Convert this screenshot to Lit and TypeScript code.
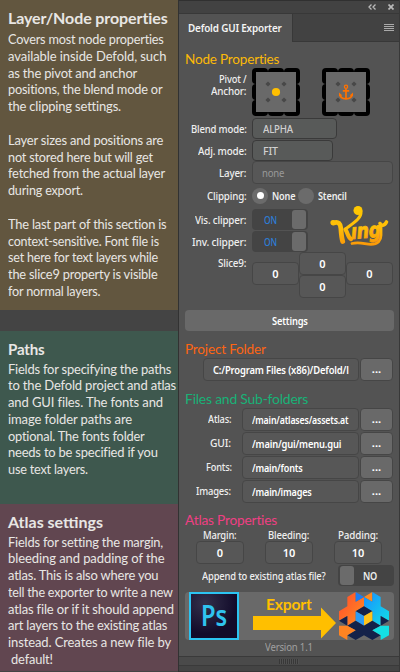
import { LitElement, html, css, svg, nothing } from "lit";
import { customElement, property } from "lit/decorators.js";

/* A single line of text fitted to a given width: light tracking first, then a horizontal scale. */
@customElement("fit-text")
class FitText extends LitElement {
  @property() text = "";
  @property({ type: Number }) width = 0;
  static styles = css`
    :host { display: inline-block; white-space: pre; flex: none; text-align: left; }
    .line { display: inline-block; white-space: pre; transform-origin: 0 50%; }
  `;
  render() {
    return html`<span class="line">${this.text}</span>`;
  }
  updated() {
    const line = this.renderRoot.querySelector(".line") as HTMLElement;
    const n = this.text.length - 1;
    const natural = line.offsetWidth;
    const gap = Math.max(-0.2, Math.min(0.3, (this.width - natural) / n));
    line.style.letterSpacing = `${gap}px`;
    line.style.marginRight = `${this.width - natural - gap * (n + 1)}px`;
    line.style.transform = `scaleX(${this.width / (natural + gap * n)})`;
  }
}

const t = (text: string, width: number, cls = "") =>
  html`<fit-text class=${cls} .text=${text} .width=${width}></fit-text>`;

type Line = [string, number];

const layerLines: Line[] = [
  ["Covers most node properties", 156],
  ["available inside Defold, such", 158],
  ["as the pivot and anchor", 129],
  ["positions, the blend mode or", 155],
  ["the clipping settings.", 113],
  ["", 0],
  ["Layer sizes and positions are", 156],
  ["not stored here but will get", 145],
  ["fetched from the actual layer", 157],
  ["during export.", 75],
  ["", 0],
  ["The last part of this section is", 159],
  ["context-sensitive. Font file is", 151],
  ["set here for text layers while", 150],
  ["the slice9 property is visible", 150],
  ["for normal layers.", 93],
];
const pathLines: Line[] = [
  ["Fields for specifying the paths", 163],
  ["to the Defold project and atlas", 168],
  ["and GUI files. The fonts and", 155],
  ["image folder paths are", 124],
  ["optional. The fonts folder", 137],
  ["needs to be specified if you", 150],
  ["use text layers.", 80],
];
const atlasLines: Line[] = [
  ["Fields for setting the margin,", 155],
  ["bleeding and padding of the", 157],
  ["atlas. This is also where you", 151],
  ["tell the exporter to write a new", 165],
  ["atlas file or if it should append", 166],
  ["art layers to the existing atlas", 160],
  ["instead. Creates a new file by", 163],
  [" default!", 45],
];

const lines = (list: Line[]) =>
  list.map(([s, w]) => html`<div class="line">${s ? t(s, w) : nothing}</div>`);

const pad = (mark: unknown) => html`<svg class="pad" width="48" height="48" viewBox="0 0 48 48">
  ${[0, 1, 2].map((r) =>
    [0, 1, 2].map((c) => svg`<rect x=${c * 16} y=${r * 16} width="16" height="16" rx="4"></rect>`)
  )}
  <rect x="4" y="4" width="40" height="40" fill="#696969" />
  ${[16, 32].map((y) =>
    [16, 32].map((x) => svg`<path d="M${x} ${y - 2.6}l2.6 2.6l-2.6 2.6l-2.6-2.6z" fill="#484848"></path>`)
  )}
  ${mark}
</svg>`;

const dot = svg`<circle cx="24" cy="24" r="4.1" fill="#ffbf00"></circle>`;
const anchor = svg`<g fill="none" stroke="#ff7200" stroke-width="1.6">
  <circle cx="24" cy="18.8" r="1.6" stroke-width="1.3"></circle>
  <path d="M24 20.5V30.5M20.8 22.9h6.4" stroke-width="1.7"></path>
  <path d="M17.8 26.4c.4 3 2.700 4.300 6.200 4.500c3.500-.2 5.800-1.500 6.200-4.500"></path>
  <path d="M17 28.200V24.600L20.400 27.400zM31 28.200V24.600L27.600 27.400z" fill="#ff7200" stroke="none"></path>
</g>`;

const king = html`<svg class="king" width="62" height="46" viewBox="0 0 62 46">
  <defs>
    <linearGradient id="gold" x1="0" y1="0" x2="0" y2="46" gradientUnits="userSpaceOnUse">
      <stop offset="0.1" stop-color="#ffc800" />
      <stop offset="0.55" stop-color="#ffbe08" />
      <stop offset="1" stop-color="#f99008" />
    </linearGradient>
  </defs>
  <g fill="none" stroke="url(#gold)" stroke-linecap="round">
    <circle cx="28" cy="7.500" r="4.500" fill="url(#gold)" stroke="none" />
    <path d="M31 8.500C31.500 15 25 19 15.500 26" stroke-width="3" />
    <circle cx="3" cy="19.500" r="2.600" fill="url(#gold)" stroke="none" />
    <path d="M3.500 20c5-2 7 1 7.400 5.500c.3 5 .6 9 1.800 13" stroke-width="4.800" />
    <path d="M15.500 26.500c2.500 4 2.500 8 5.500 9.500" stroke-width="4.200" />
    <path d="M22 40.500c8-2 13 .8 19 .8c7 0 10-4 10-9V22" stroke-width="2.800" />
    <path d="M50 20.500c1 2.500 4.500 2.500 6.500-1.500" stroke-width="3.600" />
  </g>
  <text x="21.500" y="36" transform="rotate(-4 21.500 36)" class="wordmark" textLength="30" lengthAdjust="spacingAndGlyphs">ıng</text>
</svg>`;

const arrow = html`<svg class="arrow" width="83" height="32" viewBox="0 0 83 32">
  <path d="M0 9h68V0.500L83 16L68 31.500V23H0z" fill="#ffbf00" />
</svg>`;

const cubes = html`<svg class="cubes" width="50" height="48" viewBox="0 0 150 144">
  <defs>
    <linearGradient id="warm" x1="0" y1="0" x2="1" y2="1">
      <stop offset="0" stop-color="#ff4a2c" /><stop offset="1" stop-color="#ff9022" />
    </linearGradient>
    <linearGradient id="cool" x1="0" y1="0" x2="1" y2="1">
      <stop offset="0" stop-color="#1a8cff" /><stop offset="1" stop-color="#10e2e6" />
    </linearGradient>
  </defs>
  <path d="M50 0L25 15V43L0 58V86L25 72V101L50 86V58L75 43V15L50 29z" fill="url(#warm)" />
  <path d="M50 0L75 15L50 29z" fill="#1d7df2" />
  <path d="M100 0L75 15L100 29z" fill="#ff8a20" />
  <path d="M100 0L125 15V43L150 58V86L125 72V101L100 86V58L75 43V15L100 29z" fill="url(#cool)" />
  <path d="M75 43L100 58L75 72L50 58z" fill="#14224a" />
  <path d="M50 58L75 72V101L50 86z" fill="#2c9cf5" />
  <path d="M100 58L75 72V101L100 86z" fill="#ffc21a" />
  <path d="M0 86L25 72V101z" fill="#14224a" />
  <path d="M150 86L125 72V101z" fill="#14224a" />
  <path d="M50 86L75 101L100 86L125 101L100 115L125 130L100 144L75 130L50 144L25 130L50 115L25 101z" fill="#14224a" />
  <path d="M0 101L25 101L50 115L25 130V144L0 130z" fill="#ff8422" />
  <path d="M150 101L125 101L100 115L125 130V144L150 130z" fill="#14e0e4" />
</svg>`;

@customElement("app-root")
class AppRoot extends LitElement {
  static styles = css`
    * { box-sizing: border-box; }
    :host {
      display: flex; width: 400px; height: 672px; overflow: hidden; background: #444;
      font: 500 11px/14px "Noto Sans", "Open Sans", sans-serif; color: #eee;
    }
    svg { display: block; flex: none; }
    .notes { width: 178px; flex: none; font: 400 13px/16.8px Lato, sans-serif; color: #e8e6e4; }
    .note { padding-left: 8px; overflow: hidden; }
    .layer { height: 310px; background: #62563f; padding-top: 7px; margin-bottom: 21px; }
    .paths { height: 173px; background: #3e584e; padding-top: 7px; }
    .atlas { height: 167px; background: #614650; padding-top: 7px; }
    .title { height: 22.500px; font-size: 16px; font-weight: 700; line-height: 22px; }
    .layer .title { height: 24px; }
    .line { height: 16.800px; }

    .panel { width: 222px; flex: none; border-left: 1px solid #323232; border-right: 1px solid #383838; background: #535353; display: flex; flex-direction: column; }
    .bar { height: 14px; flex: none; background: #424242; border-top: 1px solid #303030; border-bottom: 1px solid #383838; display: flex; justify-content: flex-end; align-items: center; gap: 12px; padding-right: 5px; }
    .tabs { height: 28px; flex: none; display: flex; background: #424242; }
    .tab { width: 113px; background: #535353; padding-left: 9px; line-height: 27px; font-weight: 600; color: #f4f4f4; }
    .tabrest { flex: 1; border-left: 1px solid #383838; border-bottom: 1px solid #383838; display: flex; justify-content: flex-end; align-items: center; padding-right: 5px; }
    .body { padding: 0 5px 0 6px; height: 614px; flex: none; display: flex; flex-direction: column; }
    .h { font: 400 14px/18px Lato, sans-serif; height: 18px; flex: none; }
    .gold { color: #fbb908; margin-top: 7.500px; }
    .orange { color: #fd6513; margin-top: 9px; }
    .green { color: #18b277; margin-top: 9px; line-height: 17px; }
    .pink { color: #ef3f83; margin-top: 6.600px; }
    .row { display: flex; flex: none; }
    .label { width: 61.500px; margin-right: 5.500px; flex: none; text-align: right; }
    .pivot { font-size: 10.500px; line-height: 12px; padding-top: 5px; }
    .pivot div { height: 12px; }
    .pads { height: 49.500px; }
    .pads .pad + .pad { margin-left: 22px; }
    .select, .field, .button { height: 22px; border: 1px solid #464646; border-radius: 4px; line-height: 20px; overflow: hidden; flex: none; }
    .select { border-color: #3a3a3a; background: #585a59; padding-left: 10px; color: #d0d0d0; height: 21px; line-height: 19px; }
    .line22 { height: 22px; line-height: 21px; align-items: center; }
    .blend { width: 85px; } .adj { width: 81px; }
    .field { background: #575757; height: 23px; line-height: 21px; color: #fff; font-weight: 600; }
    .layerf { width: 141px; padding-left: 9px; color: #9a9a9a; font-weight: 400; }
    .center { text-align: center; }
    .radio { width: 16px; height: 16px; border-radius: 50%; background: #6b6b6b; display: grid; place-items: center; flex: none; }
    .on::after { content: ""; width: 7px; height: 7px; border-radius: 50%; background: #fff; }
    .clip { height: 25px; align-items: center; font-weight: 600; }
    .clip .label { font-weight: 500; }
    .clip fit-text.opt { margin: 0 3px 0 4px; }
    .switches { height: 44px; }
    .toggle { width: 56px; height: 21px; background: #444; border-radius: 4px; display: flex; align-items: center; padding: 1px 2px; flex: none; }
    .knob { width: 14px; height: 19px; background: #6b6b6b; border-radius: 3px; }
    .ontext { color: #2d7dd6; width: 38px; padding-left: 10px; line-height: 19px; }
    .king { margin: -5px 0 0 22px; }
    .wordmark { font: italic 700 21px "DejaVu Sans", sans-serif; fill: url(#gold); stroke: url(#gold); stroke-width: .9px; }
    .slice { height: 58px; align-items: flex-start; }
    .slabel { padding-top: 4px; }
    .cross { display: grid; grid-template-columns: 47px 47px 47px; align-items: start; height: 46px; }
    .side { margin-top: 10px; }
    .settings { height: 21px; background: #696969; border-radius: 4px; text-align: center; font-weight: 600; line-height: 21px; flex: none; color: #fff; }
    .project { margin-left: 18px; width: 156px; padding-left: 9px; margin-right: 1px; }
    .filerow { height: 24.100px; }
    .filerow .label { width: 46.500px; margin-right: 10.500px; line-height: 21px; font-weight: 500; }
    .path { width: 117px; padding-left: 9px; margin-right: 1px; }
    .button { width: 33px; height: 23px; background: #696969; border-color: #464646; text-align: center; font-weight: 700; color: #fff; }
    .trio { padding-left: 11px; gap: 21px; }
    .trio .cell { width: 48px; }
    .cap { height: 12px; line-height: 12px; display: flex; justify-content: center; }
    .append { padding-left: 17px; justify-content: space-between; line-height: 21px; height: 21px; margin-top: 1px; }
    .no { font-weight: 600; margin-left: 9px; line-height: 19px; }
    .export { height: 48px; margin-top: 6px; background: #696969; border-radius: 4px; display: flex; padding: 0 4px; flex: none; }
    .ps { width: 50px; height: 48px; border: 2px solid #2cc4f2; background: radial-gradient(circle at 30% 20%, #33304b, #120b2a 65%); color: #2fc3ef; font: 600 29px/42px "Noto Sans", sans-serif; padding-left: 10px; flex: none; }
    .go { width: 100px; padding-left: 14px; flex: none; }
    .word { font: 700 16px/16px Lato, sans-serif; color: #ffbf00; height: 15px; padding: 4px 0 0 13px; }
    .version { color: #a0a0a0; font-size: 11px; font-weight: 400; line-height: 14px; height: 16px; flex: none; padding-left: 80px; }
    .foot { height: 10px; flex: none; border-top: 1px solid #3a3a3a; border-bottom: 1px solid #3a3a3a; background: #4a4a4a; display: flex; justify-content: center; align-items: center; }
    .grip { width: 20px; height: 5px; background: repeating-linear-gradient(90deg, #383838 0 1px, #505050 1px 2px); }
    .rest { flex: 1; background: #444; border-bottom: 1px solid #363636; }
  `;

  file(label: string, lw: number, path: string, pw: number) {
    return html`<div class="row filerow">
      <div class="label">${t(label, lw)}</div>
      <div class="field path">${t(path, pw)}</div>
      <div class="button">...</div>
    </div>`;
  }

  cell(label: string, lw: number, value: string) {
    return html`<div class="cell">
      <div class="cap">${t(label, lw)}</div>
      <div class="field center">${value}</div>
    </div>`;
  }

  render() {
    return html`
      <div class="notes">
        <div class="note layer"><div class="title">${t("Layer/Node properties", 160)}</div>${lines(layerLines)}</div>
        <div class="note paths"><div class="title">${t("Paths", 37)}</div>${lines(pathLines)}</div>
        <div class="note atlas"><div class="title">${t("Atlas settings", 95)}</div>${lines(atlasLines)}</div>
      </div>
      <div class="panel">
        <div class="bar">
          <svg width="8" height="6" viewBox="0 0 8 6"><path d="M3.500 .5L1 3L3.500 5.500M7.500 .5L5 3L7.500 5.500" fill="none" stroke="#bbb" stroke-width="1.300" /></svg>
          <svg width="6" height="6" viewBox="0 0 6 6"><path d="M.5 .5L5.500 5.500M5.500 .5L.5 5.500" stroke="#bbb" stroke-width="1.700" /></svg>
        </div>
        <div class="tabs">
          <div class="tab">${t("Defold GUI Exporter", 94)}</div>
          <div class="tabrest">
            <svg width="10" height="8" viewBox="0 0 10 8"><path d="M0 .5h10M0 2.500h10M0 4.500h10M0 6.500h10" stroke="#aaa" /></svg>
          </div>
        </div>
        <div class="body">
          <div class="h gold">${t("Node Properties", 95)}</div>
          <div class="row pads">
            <div class="label pivot"><div>${t("Pivot /", 27.5)}</div><div>${t("Anchor:", 35.5)}</div></div>
            ${pad(dot)}${pad(anchor)}
          </div>
          <div class="row line22"><div class="label">${t("Blend mode:", 55.5)}</div><div class="select blend">${t("ALPHA", 30)}</div></div>
          <div class="row line22"><div class="label">${t("Adj. mode:", 48.5)}</div><div class="select adj">${t("FIT", 15)}</div></div>
          <div class="row line22"><div class="label">${t("Layer:", 27.5)}</div><div class="field layerf">${t("none", 22)}</div></div>
          <div class="row clip">
            <div class="label">${t("Clipping:", 39.5)}</div>
            <span class="radio on"></span>${t("None", 23.5, "opt")}
            <span class="radio"></span>${t("Stencil", 29, "opt")}
          </div>
          <div class="row switches">
            <div>
              <div class="row line22"><div class="label">${t("Vis. clipper:", 51.5)}</div><div class="toggle"><span class="ontext">${t("ON", 13)}</span><span class="knob"></span></div></div>
              <div class="row line22"><div class="label">${t("Inv. clipper:", 54.5)}</div><div class="toggle"><span class="ontext">${t("ON", 13)}</span><span class="knob"></span></div></div>
            </div>
            ${king}
          </div>
          <div class="row slice">
            <div class="label slabel">${t("Slice9:", 28.5)}</div>
            <div class="cross">
              <div class="field center side">0</div>
              <div><div class="field center">0</div><div class="field center">0</div></div>
              <div class="field center side">0</div>
            </div>
          </div>
          <div class="settings">${t("Settings", 36)}</div>
          <div class="h orange">${t("Project Folder", 81)}</div>
          <div class="row">
            <div class="field project">${t("C:/Program Files (x86)/Defold/l", 136)}</div>
            <div class="button">...</div>
          </div>
          <div class="h green">${t("Files and Sub-folders", 123)}</div>
          ${this.file("Atlas:", 23.5, "/main/atlases/assets.at", 97)}
          ${this.file("GUI:", 21, "/main/gui/menu.gui", 89)}
          ${this.file("Fonts:", 26, "/main/fonts", 51)}
          ${this.file("Images:", 35, "/main/images", 60)}
          <div class="h pink">${t("Atlas Properties", 92)}</div>
          <div class="row trio">
            ${this.cell("Margin:", 34, "0")}${this.cell("Bleeding:", 41, "10")}${this.cell("Padding:", 40, "10")}
          </div>
          <div class="row append">
            ${t("Append to existing atlas file?", 124)}
            <div class="toggle"><span class="knob"></span><span class="no">${t("NO", 14)}</span></div>
          </div>
          <div class="export">
            <div class="ps">${t("Ps", 26)}</div>
            <div class="go"><div class="word">${t("Export", 46)}</div>${arrow}</div>
            ${cubes}
          </div>
          <div class="version">${t("Version 1.1", 48)}</div>
        </div>
        <div class="foot"><div class="grip"></div></div>
        <div class="rest"></div>
      </div>
    `;
  }
}
